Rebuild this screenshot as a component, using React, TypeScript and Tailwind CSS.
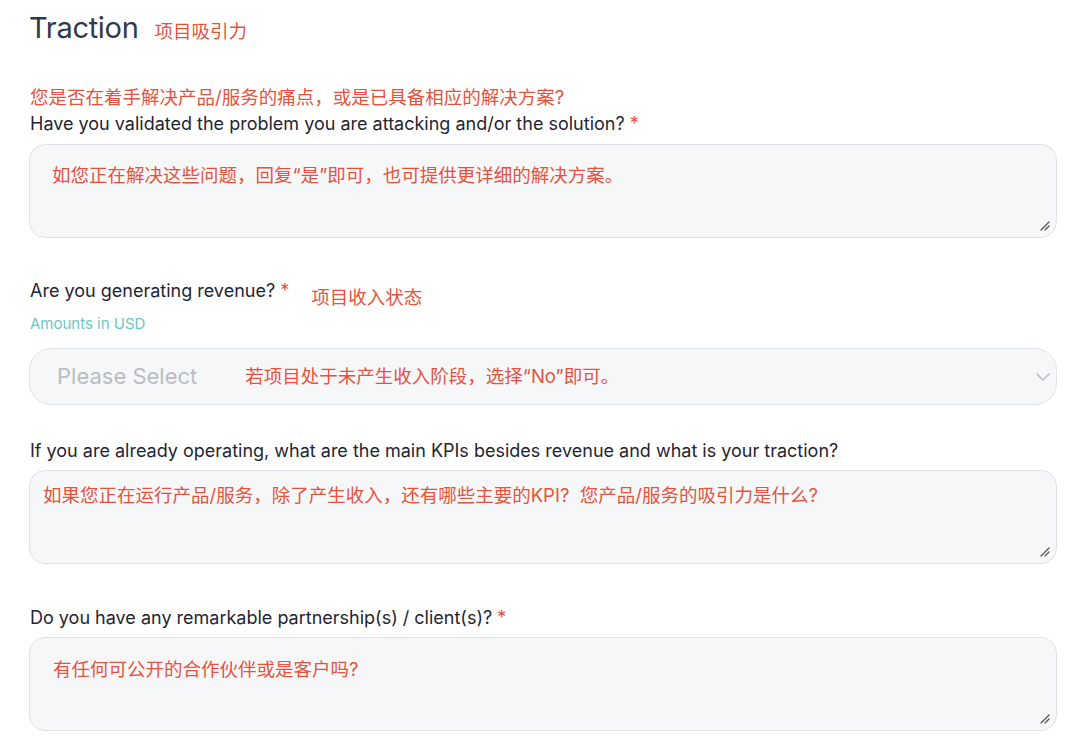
import React from "react";

const cjk = { fontFamily: 'Inter, "Noto Sans CJK SC", sans-serif' };

function Grip() {
  return (
    <svg className="absolute right-[6px] bottom-[6px]" width="10" height="10" viewBox="0 0 10 10">
      <line x1="1" y1="9" x2="9" y2="1" stroke="#555" strokeWidth="1.2" strokeLinecap="round" />
      <line x1="5" y1="9" x2="9" y2="5" stroke="#555" strokeWidth="1.2" strokeLinecap="round" />
    </svg>
  );
}

function Box({ text, padClass, className }: { text: string; padClass: string; className?: string }) {
  return (
    <div className={`relative h-[94px] rounded-[16px] border border-[#dfe2e8] bg-[#f6f7f9] ${className ?? ""}`}>
      <div className={`${padClass} text-[18.5px] leading-[26px] text-[#e5533d] whitespace-pre`}>{text}</div>
      <Grip />
    </div>
  );
}

export default function App() {
  return (
    <div className="w-[1080px] h-[753px] bg-white overflow-hidden" style={cjk}>
      <div className="pl-[29px] pr-[23px]">
        <div className="flex items-baseline pt-[10px] h-[40px]">
          <span className="text-[29px] leading-[36px] text-[#2f3a4c] tracking-[-0.3px]">Traction</span>
          <span className="ml-[16px] text-[18.5px] text-[#e5533d]">项目吸引力</span>
        </div>

        <div className="mt-[44px] text-[18.5px] leading-[26px] text-[#e5533d] pl-[1px]">您是否在着手解决产品/服务的痛点，或是已具备相应的解决方案?</div>
        <div className="mt-[1px] text-[18px] leading-[26px] text-[#1f2532] pl-[1px]">
          Have you validated the problem you are attacking and/or the solution? <span className="text-[#e5533d]">*</span>
        </div>
        <Box className="mt-[7px]" padClass="pl-[22px] pt-[17px]" text="如您正在解决这些问题，回复“是”即可，也可提供更详细的解决方案。" />

        <div className="mt-[40px] flex items-end text-[18px] leading-[26px] pl-[1px]">
          <span className="text-[#1f2532]">
            Are you generating revenue? <span className="text-[#e5533d]">*</span>
          </span>
          <span className="ml-[22px] text-[18.5px] text-[#e5533d] translate-y-[6px]">项目收入状态</span>
        </div>
        <div className="mt-[10px] text-[15px] leading-[20px] text-[#6cc7c4] pl-[1px]">Amounts in USD</div>
        <div className="relative mt-[14px] h-[57px] rounded-[22px] border border-[#dfe2e8] bg-[#f6f7f9] flex items-center">
          <span className="ml-[27px] text-[22px] text-[#b9bcc1]">Please Select</span>
          <span className="ml-[48px] text-[18.5px] text-[#e5533d]">若项目处于未产生收入阶段，选择“No”即可。</span>
          <svg className="absolute right-[6px] top-[23px]" width="14" height="10" viewBox="0 0 14 10">
            <path d="M1 2 L7 8 L13 2" fill="none" stroke="#b9bcc1" strokeWidth="1.5" strokeLinecap="round" />
          </svg>
        </div>

        <div className="mt-[33px] text-[18px] leading-[26px] text-[#1f2532] pl-[1px]">
          If you are already operating, what are the main KPIs besides revenue and what is your traction?
        </div>
        <Box className="mt-[6px]" padClass="pl-[13px] pt-[11px]" text="如果您正在运行产品/服务，除了产生收入，还有哪些主要的KPI?  您产品/服务的吸引力是什么?" />

        <div className="mt-[41px] text-[18px] leading-[26px] text-[#1f2532] pl-[1px]">
          Do you have any remarkable partnership(s) / client(s)? <span className="text-[#e5533d]">*</span>
        </div>
        <Box className="mt-[6px]" padClass="pl-[23px] pt-[18px]" text="有任何可公开的合作伙伴或是客户吗?" />
      </div>
    </div>
  );
}
